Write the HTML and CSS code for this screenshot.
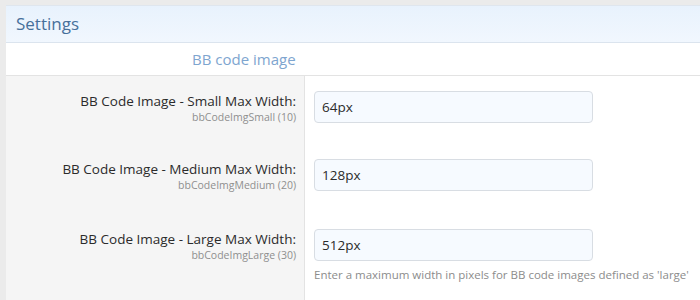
FILE: index.html
```html
<!DOCTYPE html>
<html lang="en">
<head>
  <meta charset="UTF-8" />
  <title>Settings</title>
  <link rel="stylesheet" href="styles.css">
</head>
<body>
  <div class="panel">
    <h2 class="panel-header">Settings</h2>
    <h3 class="group-title">BB code image</h3>

    <div class="option-row">
      <div class="option-label">
        <label for="imgSmall">BB Code Image - Small Max Width:</label>
        <span class="option-id">bbCodeImgSmall (10)</span>
      </div>
      <div class="option-input">
        <input type="text" id="imgSmall" value="64px" />
      </div>
    </div>

    <div class="option-row">
      <div class="option-label">
        <label for="imgMedium">BB Code Image - Medium Max Width:</label>
        <span class="option-id">bbCodeImgMedium (20)</span>
      </div>
      <div class="option-input">
        <input type="text" id="imgMedium" value="128px" />
      </div>
    </div>

    <div class="option-row">
      <div class="option-label">
        <label for="imgLarge">BB Code Image - Large Max Width:</label>
        <span class="option-id">bbCodeImgLarge (30)</span>
      </div>
      <div class="option-input">
        <input type="text" id="imgLarge" value="512px" />
        <div class="option-explain">Enter a maximum width in pixels for BB code images defined as 'large'</div>
      </div>
    </div>
  </div>
</body>
</html>
```

FILE: styles.css
```css
* {
  margin: 0;
  padding: 0;
  box-sizing: border-box;
}
html, body {
  height: 100%;
  overflow: hidden;
}
body {
  background: #ebebeb;
  font-family: 'Open Sans', 'Noto Sans', sans-serif;
  color: #141414;
  padding: 5px 0 0 6px;
}
.panel {
  background: #ffffff;
  border-top: 1px solid #dfe6ee;
}
.panel-header {
  font-size: 17px;
  font-weight: 400;
  color: #47709b;
  padding: 0 10px;
  height: 37px;
  line-height: 36px;
  background: linear-gradient(to bottom, #e8f2fd, #f1f7fe);
  border-bottom: 1px solid #dbe4ee;
}
.group-title {
  font-size: 15px;
  font-weight: 400;
  color: #7ea5cf;
  height: 33px;
  line-height: 32px;
  padding-left: 186px;
  border-bottom: 1px solid #e3e3e3;
}
.option-row {
  display: flex;
}
.option-label {
  width: 299px;
  flex-shrink: 0;
  background: #f5f5f5;
  border-right: 1px solid #e3e3e3;
  text-align: right;
  padding: 16px 8px 0 0;
  height: 68px;
}
.option-row:last-child .option-label {
  height: 88px;
  padding-top: 18px;
}
.option-label label {
  display: block;
  font-size: 13.5px;
  line-height: 18px;
  color: #2b2b2b;
}
.option-id {
  display: block;
  font-size: 10.5px;
  line-height: 14px;
  color: #8f8f8f;
}
.option-input {
  padding: 15px 0 0 9px;
}
.option-row:last-child .option-input {
  padding-top: 17px;
}
.option-input input {
  width: 279px;
  height: 32px;
  padding: 0 7px;
  border: 1px solid #d8dde3;
  border-radius: 4px;
  background: #f6faff;
  font-family: inherit;
  font-size: 13.5px;
  color: #2b2b2b;
}
.option-explain {
  font-size: 11.5px;
  color: #8c8c8c;
  margin-top: 6px;
}
```
